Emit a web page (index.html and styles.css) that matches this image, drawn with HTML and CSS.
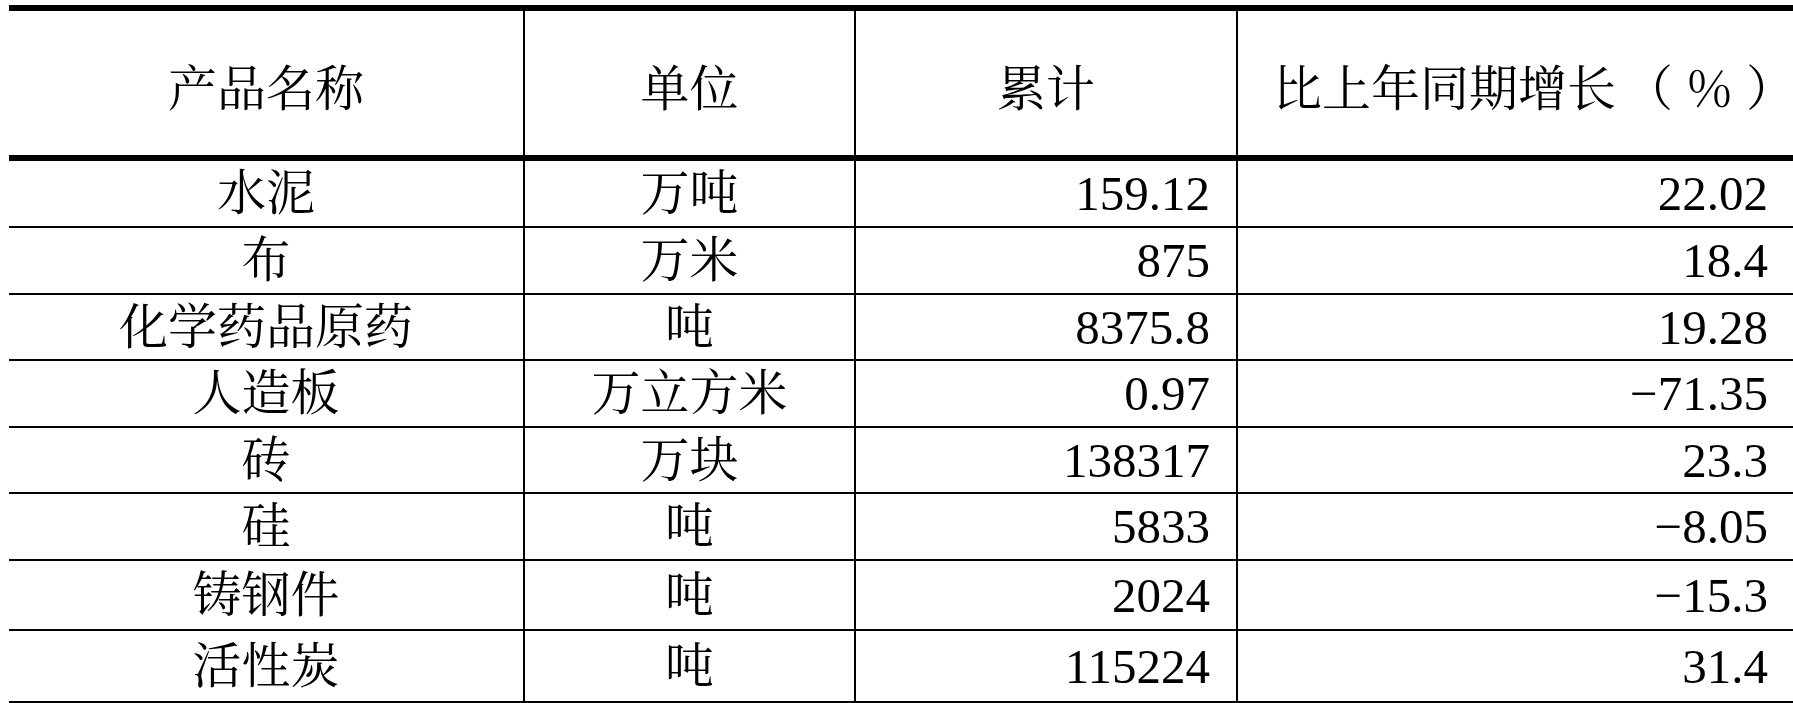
FILE: index.html
```html
<!DOCTYPE html>
<html lang="zh-CN">
<head>
<meta charset="utf-8">
<title>产品产量</title>
<link rel="stylesheet" href="styles.css">
</head>
<body>
<table class="stats">
  <colgroup>
    <col class="c-name">
    <col class="c-unit">
    <col class="c-total">
    <col class="c-growth">
  </colgroup>
  <thead>
    <tr>
      <th>产品名称</th>
      <th>单位</th>
      <th>累计</th>
      <th class="growth-head">比上年同期增长<span class="pct">（<span class="pct-sign">％</span><span class="pct-close">）</span></span></th>
    </tr>
  </thead>
  <tbody>
    <tr><td>水泥</td><td>万吨</td><td class="num">159.12</td><td class="num">22.02</td></tr>
    <tr><td>布</td><td>万米</td><td class="num">875</td><td class="num">18.4</td></tr>
    <tr><td>化学药品原药</td><td>吨</td><td class="num">8375.8</td><td class="num">19.28</td></tr>
    <tr><td>人造板</td><td>万立方米</td><td class="num">0.97</td><td class="num">−71.35</td></tr>
    <tr><td>砖</td><td>万块</td><td class="num">138317</td><td class="num">23.3</td></tr>
    <tr><td>硅</td><td>吨</td><td class="num">5833</td><td class="num">−8.05</td></tr>
    <tr><td>铸钢件</td><td>吨</td><td class="num">2024</td><td class="num">−15.3</td></tr>
    <tr><td>活性炭</td><td>吨</td><td class="num">115224</td><td class="num">31.4</td></tr>
  </tbody>
</table>
</body>
</html>
```
FILE: styles.css
```css
html, body {
  margin: 0;
  padding: 0;
  background: #ffffff;
}

body {
  padding: 5px 0 0 9px;
  overflow: hidden;
  font-family: "Liberation Serif", "Noto Serif CJK SC", "Noto Sans CJK SC", serif;
  color: #000000;
}

.stats {
  width: 1784px;
  table-layout: fixed;
  border-collapse: separate;
  border-spacing: 0;
  border-top: 6px solid #000;
  font-size: 49px;
  font-weight: normal;
  line-height: 1;
}

.c-name { width: 516px; }
.c-unit { width: 331px; }
.c-total { width: 382px; }
.c-growth { width: 555px; }

.stats th,
.stats td {
  box-sizing: border-box;
  padding: 0;
  text-align: center;
  vertical-align: middle;
  white-space: nowrap;
  border-bottom: 2px solid #000;
  border-right: 2px solid #000;
}

.stats th:last-child,
.stats td:last-child {
  border-right: none;
}

.stats th {
  font-weight: normal;
  height: 150px;
  padding-top: 12px;
  border-bottom-width: 6px;
}

.stats th.growth-head {
  text-align: left;
  padding-left: 35px;
}

.pct {
  margin-left: 8px;
}

.pct-sign {
  margin-left: 12px;
}

.pct-close {
  margin-left: 12px;
}

.stats td {
  height: 67px;
}

.stats td.num {
  text-align: right;
  padding-right: 26px;
}

.stats td.num:last-child {
  padding-right: 25px;
}

.stats tbody tr:nth-child(3) td,
.stats tbody tr:nth-child(5) td {
  height: 66px;
}

.stats tbody tr:nth-child(7) td {
  height: 70px;
}

.stats tbody tr:nth-child(8) td {
  height: 76px;
  border-bottom-width: 6px;
}
```
